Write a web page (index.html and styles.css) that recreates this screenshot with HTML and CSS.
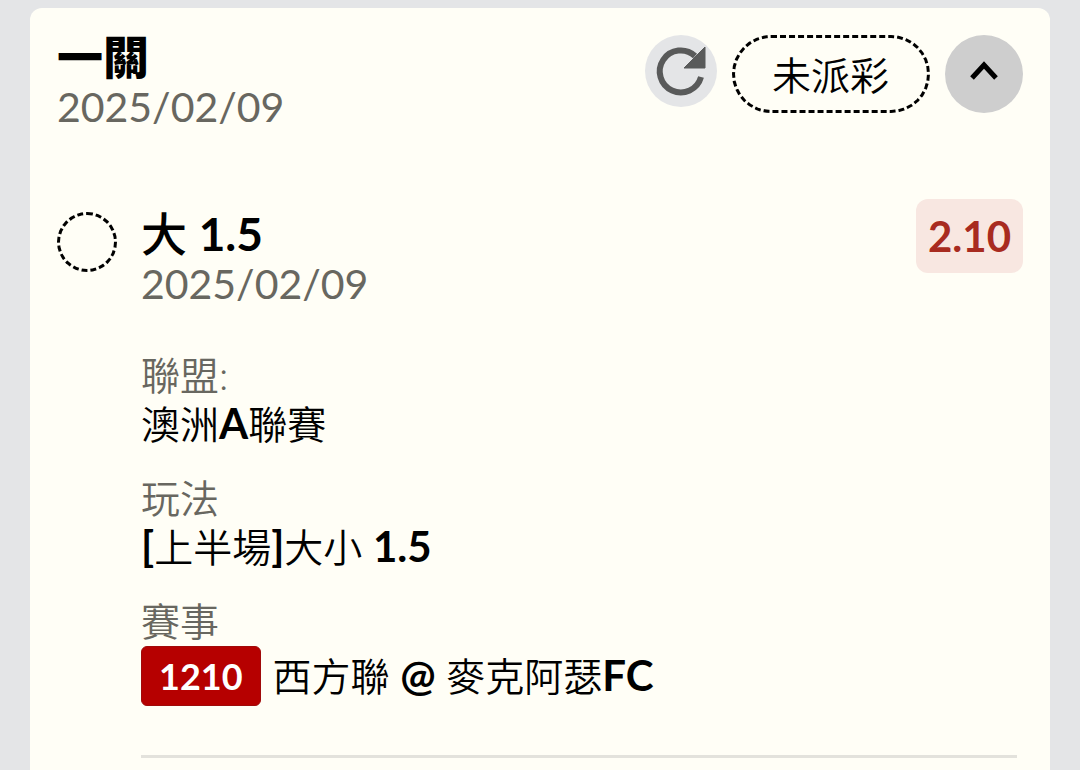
FILE: index.html
```html
<!DOCTYPE html>
<html lang="zh-Hant">
<head>
  <meta charset="UTF-8">
  <title>一關</title>
  <meta name="viewport" content="width=device-width, initial-scale=1.0">
  <link rel="stylesheet" href="styles.css">
</head>
<body>
  <main class="card">
    <header class="card-header">
      <div>
        <h1 class="title">一關</h1>
        <p class="date">2025/02/09</p>
      </div>
      <div class="actions">
        <button class="refresh" type="button" aria-label="重新整理">
          <svg width="72" height="72" viewBox="0 0 72 72">
            <path d="M56 42A21 21 0 1 1 50 21" fill="none" stroke="#595a5a" stroke-width="6"/>
            <path d="M60 12V33H39L50 22Z" fill="#595a5a" stroke="#595a5a"/>
          </svg>
        </button>
        <span class="status">未派彩</span>
        <button class="toggle" type="button" aria-label="收合" aria-expanded="true">
          <svg width="78" height="78" viewBox="0 0 78 78">
            <path d="M27 43L39 30L51 43" fill="none" stroke="#000" stroke-width="5"/>
          </svg>
        </button>
      </div>
    </header>

    <article class="bet">
      <span class="marker"></span>
      <div class="bet-body">
        <div class="bet-top">
          <div>
            <h2 class="pick">大 <b>1.5</b></h2>
            <p class="date">2025/02/09</p>
          </div>
          <span class="odds">2.10</span>
        </div>
        <dl class="details">
          <dt>聯盟:</dt>
          <dd>澳洲<b>A</b>聯賽</dd>
          <dt>玩法</dt>
          <dd><b>[</b>上半場<b>]</b>大小 <b>1.5</b></dd>
          <dt>賽事</dt>
          <dd class="match"><span class="code">1210</span><span>西方聯 <b>@</b> 麥克阿瑟<b>FC</b></span></dd>
        </dl>
        <hr class="divider">
      </div>
    </article>
  </main>
</body>
</html>
```

FILE: styles.css
```css
* { box-sizing: border-box; }
body {
  margin: 0;
  padding: 8px 30px 0;
  font-family: Lato, "Noto Sans CJK TC", sans-serif;
  font-size: 39px;
  background: #e4e5e7;
  color: #000;
}
h1, h2, p, dl, dd { margin: 0; }
button {
  padding: 0;
  border: 0;
  border-radius: 50%;
  cursor: pointer;
}
svg { display: block; }
.card {
  min-height: calc(100vh - 8px);
  padding: 24px 27px 0;
  border-radius: 12px 12px 0 0;
  background: #fffef6;
}
.card-header {
  display: flex;
  justify-content: space-between;
  align-items: flex-start;
}
.title {
  font-size: 46px;
  font-weight: 900;
  line-height: 50px;
}
.date {
  font-size: 41px;
  line-height: 50px;
  color: #686760;
}
.actions {
  display: flex;
  align-items: flex-start;
  gap: 15px;
  padding-top: 3px;
}
.refresh { background: #e4e5e7; }
.toggle { background: #cecece; }
.status {
  height: 78px;
  padding: 0 38px 0 37px;
  border: 3px dashed #000;
  border-radius: 39px;
  font-weight: 350;
  line-height: 74px;
}
.bet {
  display: flex;
  gap: 24px;
  margin-top: 67px;
}
.marker {
  flex: none;
  width: 60px;
  height: 60px;
  margin-top: 13px;
  border: 3px dashed #000;
  border-radius: 50%;
}
.bet-body { flex: 1; }
.bet-top {
  display: flex;
  justify-content: space-between;
  align-items: flex-start;
}
.pick {
  padding-top: 10px;
  font-size: 46px;
  font-weight: 500;
  line-height: 50px;
}
.pick b { font-weight: 700; }
.odds {
  padding: 0 12px;
  border-radius: 12px;
  background: #f8e7e1;
  color: #a82b20;
  font-size: 42px;
  font-weight: 700;
  line-height: 74px;
}
.details {
  margin-top: 42px;
  font-size: 39px;
  line-height: 49px;
}
.details dt {
  font-weight: 350;
  color: #686760;
}
.details dd {
  margin-bottom: 25px;
  font-weight: 350;
}
.details dd b {
  font-size: 42px;
  font-weight: 700;
  line-height: 1;
}
.details .match {
  display: flex;
  align-items: center;
  gap: 12px;
  margin-bottom: 49px;
}
.code {
  padding: 0 17px;
  border: 1px solid #a00a0a;
  border-radius: 6px;
  background: #b60000;
  color: #fff;
  font-size: 36px;
  font-weight: 700;
  line-height: 58px;
}
.divider {
  height: 3px;
  margin: 0 6px 0 0;
  border: 0;
  background: #e3e2dc;
}
```
